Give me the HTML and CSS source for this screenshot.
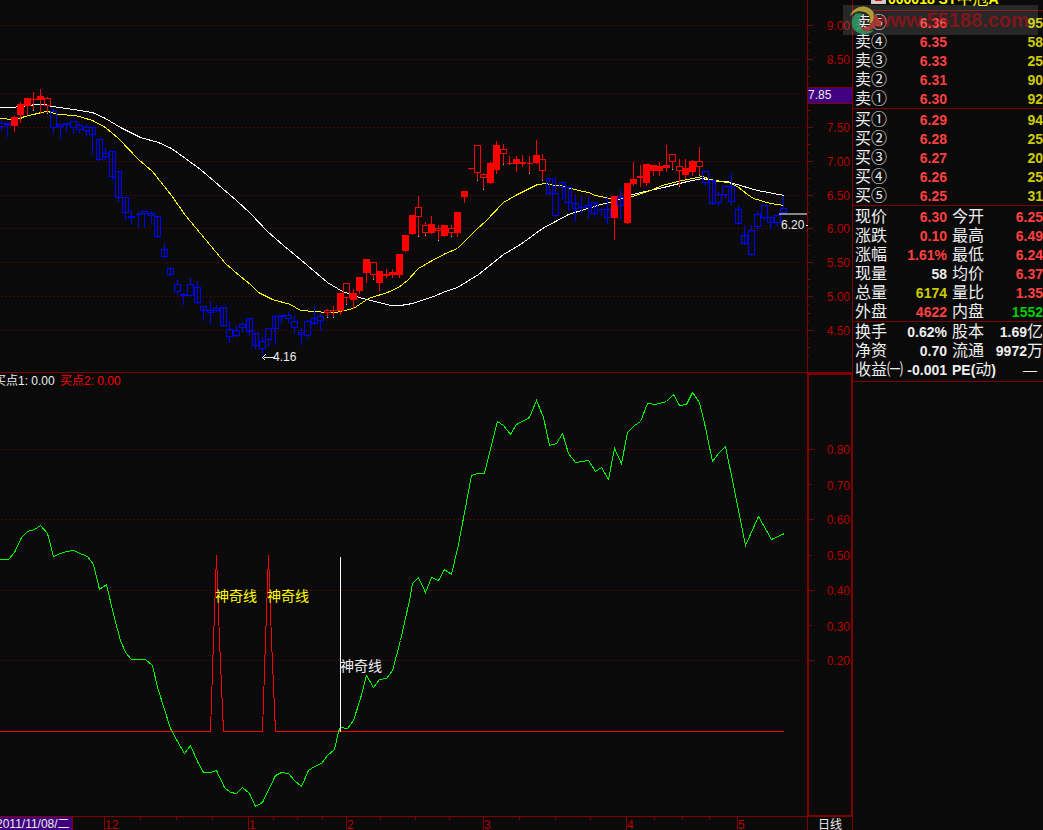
FILE: index.html
```html
<!DOCTYPE html>
<html lang="zh-CN">
<head>
  <meta charset="UTF-8">
  <meta name="viewport" content="width=device-width, initial-scale=1.0">
  <title>ST中冠A 日线</title>
  <link rel="stylesheet" href="styles.css">
</head>
<body>
  <main class="charts">
    <svg id="price" class="panel" viewBox="0 0 853 373" role="img" aria-label="K线"></svg>
    <svg id="indicator" class="panel" viewBox="0 373 853 444" role="img" aria-label="指标"></svg>
    <div class="time">
      <svg id="dates" class="dates" viewBox="0 817 807 13" role="img" aria-label="日期"></svg>
      <button type="button" class="period">日线</button>
    </div>
  </main>

  <aside class="quote">
    <header class="stock">
      <span class="flag"></span>
      <span class="code">000018 ST<span class="cn">中冠</span>A</span>
    </header>

    <table class="sell">
      <tr><th>卖⑤</th><td class="up">6.36</td><td class="vol">95</td></tr>
      <tr><th>卖④</th><td class="up">6.35</td><td class="vol">58</td></tr>
      <tr><th>卖③</th><td class="up">6.33</td><td class="vol">25</td></tr>
      <tr><th>卖②</th><td class="up">6.31</td><td class="vol">90</td></tr>
      <tr><th>卖①</th><td class="up">6.30</td><td class="vol">92</td></tr>
    </table>

    <table class="buy">
      <tr><th>买①</th><td class="up">6.29</td><td class="vol">94</td></tr>
      <tr><th>买②</th><td class="up">6.28</td><td class="vol">25</td></tr>
      <tr><th>买③</th><td class="up">6.27</td><td class="vol">20</td></tr>
      <tr><th>买④</th><td class="up">6.26</td><td class="vol">25</td></tr>
      <tr><th>买⑤</th><td class="up">6.25</td><td class="vol">31</td></tr>
    </table>

    <table class="today">
      <tr><th>现价</th><td class="up">6.30</td><th>今开</th><td class="up">6.25</td></tr>
      <tr><th>涨跌</th><td class="up">0.10</td><th>最高</th><td class="up">6.49</td></tr>
      <tr><th>涨幅</th><td class="up">1.61%</td><th>最低</th><td class="up">6.24</td></tr>
      <tr><th>现量</th><td>58</td><th>均价</th><td class="up">6.37</td></tr>
      <tr><th>总量</th><td class="vol">6174</td><th>量比</th><td class="up">1.35</td></tr>
      <tr><th>外盘</th><td class="up">4622</td><th>内盘</th><td class="down">1552</td></tr>
    </table>

    <table class="basics">
      <tr><th>换手</th><td>0.62%</td><th>股本</th><td>1.69<span class="cn">亿</span></td></tr>
      <tr><th>净资</th><td>0.70</td><th>流通</th><td>9972<span class="cn">万</span></td></tr>
      <tr><th>收益㈠</th><td>-0.001</td><th><b>PE(</b>动<b>)</b></th><td class="none">—</td></tr>
    </table>
  </aside>

  <div class="watermark">
    <svg class="logo" width="34" height="30" viewBox="0 0 34 30">
      <path d="M2 11 C6 0 20 -2 26 8 C28 13 26 17 21 19 C24 13 21 8 16 7 C11 5 6 7 2 11Z" fill="#b8a838"/>
      <path d="M7 9 C1 16 3 27 14 29 C19 30 24 28 26 25 C19 27 14 24 12 20 C10 16 12 12 15 9 C12 8 9 8 7 9Z" fill="#2f9464"/>
      <path d="M25 8 C31 12 34 18 33 22 C28 18 26 24 21 26 C17 27 14 25 12 22 C17 24 22 21 24 17 C26 14 26 11 25 8Z" fill="#b03a34"/>
    </svg>
    <span class="site">www.55188.com</span>
  </div>

  <script src="chart.js"></script>
</body>
</html>
```
FILE: styles.css
```css
* {box-sizing: border-box;}
body {
  margin: 0;
  display: flex;
  align-items: flex-start;
  min-height: 100vh;
  position: relative;
  overflow: hidden;
  background: #0a0a0a;
  color: #eee;
  font-family: "Liberation Sans", "Noto Sans CJK SC", sans-serif;
}

/* charts */
.charts {flex: 1; min-width: 0;}
.panel {display: block; width: 100%; height: auto;}
.time {display: grid; grid-template-columns: 807fr 46fr; overflow: hidden;}
.dates {display: block; width: 100%;}
.period {
  height: 13px;
  padding: 0;
  border: solid #800000;
  border-width: 0 1px;
  background: none;
  color: #eee;
  font: 12px/13px "Noto Sans CJK SC", sans-serif;
}

svg text {font-size: 12px;}
svg .signal {font-size: 14px;}
.grid {stroke: #800000; stroke-dasharray: 1 3;}
.frame {stroke: #800000; fill: none;}
.frame-thick {stroke: #800000; stroke-width: 2; fill: none;}
.scale {fill: #b80000;}
.frame.mark, .mark {fill: #400080;}
.white {fill: #eee;}
.yellow {fill: #ff0;}
.red {fill: #f00;}
.last {fill: #888;}
.line {fill: none; stroke-width: 1;}

/* quote panel */
.quote {width: 190px; overflow: hidden;}
.stock {
  display: flex;
  align-items: flex-end;
  gap: 2px;
  height: 10px;
  padding-left: 18px;
}
.flag {
  width: 15px;
  height: 15px;
  margin-bottom: 6px;
  border: solid #ccc;
  border-width: 3px 4px;
  background: #f00;
}
.code {color: #ff0; font-size: 14px; font-weight: bold; line-height: 22px; white-space: nowrap;}
.cn {font-size: 16px; font-weight: normal; line-height: 16px;}
table {
  width: 100%;
  table-layout: fixed;
  border-spacing: 0;
  border-top: 1px solid #800000;
}
th, td {height: 19px; padding: 0; line-height: 18px; white-space: nowrap;}
th {width: 42px; padding-left: 2px; text-align: left; font-size: 16px; font-weight: normal;}
th b {font-size: 14px;}
td {text-align: right; font-size: 14px; font-weight: bold;}
td:nth-child(2) {width: 52px;}
th:nth-child(3) {width: 45px; padding-left: 5px;}
.sell {padding-top: 2px;}
.buy, .today {padding-top: 1px;}
.basics {padding-bottom: 2px; border-bottom: 1px solid #800000;}
.up {color: #ff4040;}
.down {color: #0c0;}
.vol {color: #cc0;}
.none {padding-right: 6px; font-weight: normal;}

/* site stamp laid over the top right corner */
.watermark {
  position: absolute;
  top: 5px;
  right: 5px;
  display: flex;
  align-items: center;
  width: 195px;
  height: 30px;
  padding-left: 5px;
  background: rgba(255, 255, 255, 0.12);
}
.logo {flex: none; margin-right: -7px; opacity: 0.9;}
.site {color: rgba(190, 10, 20, 0.6); font-size: 20px; font-weight: bold;}
```
FILE: chart.js
```js
const NS = 'http://www.w3.org/2000/svg';

// high, open/close top, bottom, low, kind
// b = falling, B = falling with the wick drawn through, r = hollow rise, R = solid rise
const candles = [
  [119,123,126,129,'b'], [123,123,124,135,'b'], [115,117,125,130,'R'], [101,104,114,121,'R'],
  [97,98,105,113,'R'], [91,99,99,109,'r'], [88,96,99,112,'R'], [96,98,105,112,'r'],
  [108,111,127,132,'b'], [124,124,126,137,'b'], [123,123,124,131,'b'], [120,121,127,132,'b'],
  [122,125,129,131,'b'], [124,127,130,135,'b'], [127,127,134,153,'B'], [138,139,159,159,'B'],
  [147,153,156,158,'b'], [151,151,176,178,'B'], [171,171,197,200,'B'], [197,197,212,219,'B'],
  [209,216,217,223,'b'], [211,214,214,226,'b'], [211,211,213,226,'b'], [210,213,215,221,'b'],
  [216,216,236,236,'B'], [242,249,256,256,'B'], [267,268,274,274,'B'], [278,284,291,293,'b'],
  [292,294,295,303,'b'], [277,284,295,295,'b'], [280,287,302,302,'B'], [306,306,310,319,'B'],
  [300,310,312,323,'b'], [304,308,310,310,'b'], [307,307,325,325,'B'], [320,329,336,341,'b'],
  [325,330,335,335,'b'], [321,324,327,330,'b'], [318,318,331,334,'B'], [331,333,345,347,'B'],
  [336,341,348,353,'b'], [327,328,339,345,'b'], [314,316,328,343,'B'], [314,315,316,321,'b'],
  [311,315,318,321,'b'], [314,321,327,332,'b'], [327,332,334,343,'b'], [319,321,335,337,'b'],
  [305,318,323,323,'B'], [312,316,320,329,'b'], [308,310,312,316,'r'], [305,310,310,316,'r'],
  [293,293,310,313,'R'], [283,283,297,303,'r'], [288,293,299,307,'R'], [277,277,290,292,'R'],
  [259,259,272,281,'R'], [262,262,274,278,'r'], [270,271,282,289,'R'], [268,274,275,276,'R'],
  [268,272,274,276,'R'], [254,254,274,276,'R'], [235,235,250,250,'R'], [215,215,233,233,'R'],
  [195,207,216,235,'r'], [221,225,232,234,'r'], [215,224,232,232,'R'], [224,228,230,239,'r'],
  [224,225,235,235,'R'], [224,228,232,235,'r'], [212,212,232,235,'R'], [191,191,196,201,'R'],
  [168,168,168,168,'r'], [145,145,172,179,'r'], [172,174,177,188,'r'], [161,163,182,182,'R'],
  [140,145,169,172,'R'], [143,149,153,163,'r'], [155,163,163,163,'r'], [155,159,163,170,'R'],
  [154,162,163,165,'R'], [155,163,163,172,'r'], [139,155,162,162,'R'], [153,159,170,179,'r'],
  [177,178,193,193,'B'], [176,193,215,215,'b'], [181,182,187,198,'B'], [187,187,202,209,'B'],
  [193,203,208,220,'B'], [195,207,207,211,'b'], [195,205,207,216,'b'], [202,202,213,215,'B'],
  [209,209,209,214,'b'], [195,209,217,222,'B'], [196,196,217,238,'R'], [188,197,205,217,'B'],
  [183,183,222,222,'R'], [161,179,183,184,'R'], [164,176,177,185,'R'], [164,164,182,184,'R'],
  [164,165,170,174,'R'], [161,166,170,174,'R'], [144,165,167,170,'R'], [154,154,161,168,'r'],
  [158,166,170,185,'r'], [158,168,174,177,'R'], [159,161,171,174,'R'], [146,161,166,174,'r'],
  [170,171,182,184,'b'], [180,180,203,203,'B'], [191,194,202,204,'b'], [185,186,194,196,'b'],
  [172,186,201,203,'B'], [205,209,223,223,'B'], [224,235,243,243,'B'], [224,230,254,254,'b'],
  [210,214,226,228,'b'], [205,205,217,218,'b'], [217,217,222,228,'B'], [214,215,222,224,'b'],
  [195,208,212,212,'b']
];

const ma1 = '-1,118 14,119 20,118 24,116 33,114 41,112 47,111 51,112 57,114 75,115 82,117 92,120 105,127 118,138 138,159 152,171 171,195 185,215 200,233 225,263 240,276 250,284 258,292 272,299 290,304 300,310 315,311 325,312 335,312 353,308 368,298 387,292 398,287 407,280 418,268 430,261 445,253 457,248 477,228 485,221 503,202 517,194 537,184 546,183 553,185 560,185 578,190 588,192 595,195 610,198 632,196 650,190 662,185 677,181 697,177 702,176 710,179 718,181 728,182 737,186 747,194 753,198 770,203 784,205';
const ma2 = '-1,107 11,107 20,106 30,105 34,104 44,104 52,106 73,109 92,112 105,118 120,127 140,137 158,142 171,148 185,158 200,169 236,200 250,213 267,231 283,245 300,259 327,282 342,291 362,298 375,301 390,305 400,305 412,303 433,296 445,291 457,287 478,274 503,254 520,244 542,228 568,214 597,205 612,201 632,194 663,187 687,181 702,178 710,180 727,181 733,183 757,190 784,195';
const strength = '-1,559 8,559 14,552 21,537 27,531 34,529 40,525 47,533 53,556 60,553 66,551 73,550 82,554 87,556 93,564 99,589 106,584 113,614 120,640 125,652 131,659 145,659 152,665 157,687 170,728 177,741 184,753 190,745 197,761 203,772 210,772 216,770 224,787 230,792 236,793 242,787 249,793 255,806 262,802 275,775 281,772 288,773 294,780 301,786 308,770 314,766 321,763 327,755 334,749 338,731 340,727 347,728 353,720 360,698 366,675 373,687 379,679 386,678 392,670 400,640 409,600 412,583 418,577 425,592 431,577 438,580 444,569 451,574 458,544 471,475 477,473 484,473 497,421 503,425 510,434 516,424 529,417 536,400 543,417 549,445 556,443 562,433 568,453 575,462 588,460 595,471 601,467 608,479 614,448 621,463 627,432 634,425 640,421 647,403 655,404 666,401 673,394 679,405 686,404 692,392 699,402 705,427 712,461 718,453 725,446 733,485 745,545 758,516 771,539 784,533';
const spikes = '-1,731 210,731 213,640 216,555 219,640 223,731 262,731 265,640 268,555 271,640 275,731 783,731';

function add(parent, tag, attrs, text) {
  const el = document.createElementNS(NS, tag);
  for (const key in attrs) el.setAttribute(key, attrs[key]);
  if (text) el.textContent = text;
  parent.appendChild(el);
  return el;
}

// lines are shifted by half a unit so that they fill whole pixels
function layer(svg) {
  return add(svg, 'g', { transform: 'translate(0.5 0.5)', 'shape-rendering': 'crispEdges' });
}

function hline(g, x1, x2, y, cls) {
  add(g, 'path', { d: `M${x1} ${y}H${x2}`, class: cls });
}

function vline(g, x, y1, y2, cls) {
  add(g, 'path', { d: `M${x} ${y1}V${y2}`, class: cls });
}

// every dot of a grid line covers one whole pixel
function gridLine(g, y) {
  add(g, 'path', { d: `M2 ${y}H806`, class: 'grid', transform: 'translate(-0.5 0)' });
}

function drawCandle(g, c, i) {
  const [high, top, bottom, low, kind] = c;
  const x = Math.floor(1.4 + i * 6.52);
  const color = kind.toLowerCase() === 'b' ? '#00f' : '#f00';
  const through = kind === 'B' || kind === 'R';
  const wick = through ? `M${x} ${high}V${low + 1}` : `M${x} ${high}V${top}M${x} ${bottom}V${low + 1}`;
  add(g, 'path', { d: wick, stroke: color });
  add(g, 'path', {
    d: `M${x - 3} ${top}H${x + 3}V${bottom}H${x - 3}Z`,
    stroke: color,
    fill: kind === 'R' ? color : 'none'
  });
  if (kind === 'r' && low > bottom) add(g, 'path', { d: `M${x} ${low}v1`, stroke: '#5ee' });
}

function drawPrice() {
  const svg = document.getElementById('price');
  const g = layer(svg);
  const rows = [25, 59, 93, 127, 161, 195, 228, 262, 296, 330];
  rows.forEach((y, n) => {
    gridLine(g, y);
    hline(g, 807, 812, y, 'frame');
    hline(g, 807, 808, y + 8, 'frame');
    hline(g, 807, 810, y + 17, 'frame');
    hline(g, 807, 808, y + 25, 'frame');
    if (n !== 2) {
      add(svg, 'text', { x: 850, y: y + 5, 'text-anchor': 'end', class: 'scale' }, (9 - n / 2).toFixed(2));
    }
  });
  vline(g, 807, -1, 372, 'frame');
  vline(g, 852, -1, 372, 'frame');
  hline(g, -1, 852, 372, 'frame');
  add(g, 'rect', { x: 807, y: 87, width: 45, height: 16, class: 'frame mark' });
  add(svg, 'text', { x: 808, y: 99, class: 'white' }, '7.85');
  add(g, 'polyline', { points: ma2, class: 'line', stroke: '#fff' });
  add(g, 'polyline', { points: ma1, class: 'line', stroke: '#ff0' });
  candles.forEach((c, i) => drawCandle(g, c, i));
  add(svg, 'rect', { x: 779, y: 213, width: 28, height: 2, class: 'last' });
  add(svg, 'text', { x: 781, y: 229, class: 'white' }, '6.20');
  add(g, 'path', { d: 'M805 225h2M263 357h11M262 357l3 -3M262 357l3 3', stroke: '#eee' });
  add(svg, 'text', { x: 273, y: 361, class: 'white' }, '4.16');
}

function drawIndicator() {
  const svg = document.getElementById('indicator');
  const g = layer(svg);
  [449, 519, 590, 660].forEach(y => {
    gridLine(g, y);
    hline(g, 808, 813, y, 'frame');
  });
  [484, 555, 625].forEach(y => hline(g, 808, 811, y, 'frame'));
  [449, 485, 519, 555, 590, 626, 660].forEach((y, n) => {
    add(svg, 'text', { x: 850, y: y + 5, 'text-anchor': 'end', class: 'scale' }, (0.8 - n / 10).toFixed(2));
  });
  hline(g, -1, 807, 816, 'frame');
  add(svg, 'path', { d: 'M808 374H852V816H808Z', class: 'frame-thick', 'shape-rendering': 'crispEdges' });
  add(svg, 'text', { x: -6, y: 385, class: 'white' }, '买点1: 0.00');
  add(svg, 'text', { x: 60, y: 385, class: 'red' }, '买点2: 0.00');
  add(g, 'polyline', { points: spikes, class: 'line', stroke: '#f00' });
  add(g, 'polyline', { points: strength, class: 'line', stroke: '#0f0' });
  add(g, 'path', { d: 'M340 556V731', stroke: '#fff' });
  add(svg, 'text', { x: 215, y: 601, class: 'signal yellow' }, '神奇线');
  add(svg, 'text', { x: 267, y: 601, class: 'signal yellow' }, '神奇线');
  add(svg, 'text', { x: 340, y: 671, class: 'signal white' }, '神奇线');
}

function drawDates() {
  const svg = document.getElementById('dates');
  const g = layer(svg);
  const months = { 12: 104, 1: 248, 2: 346, 3: 483, 4: 626, 5: 737 };
  for (const m in months) {
    vline(g, months[m], 816, 830, 'frame');
    add(svg, 'text', { x: months[m] + 1, y: 829, class: 'scale' }, m);
  }
  [140, 176, 212, 273, 297, 322, 380, 415, 449, 519, 555, 590, 654, 682, 709].forEach(x => {
    vline(g, x, 816, 819, 'frame');
  });
  add(svg, 'rect', { x: 0, y: 817, width: 72, height: 13, class: 'mark' });
  vline(g, 72, 816, 830, 'frame');
  add(svg, 'text', { x: -4, y: 828, class: 'white' }, '2011/11/08/二');
}

drawPrice();
drawIndicator();
drawDates();
```
